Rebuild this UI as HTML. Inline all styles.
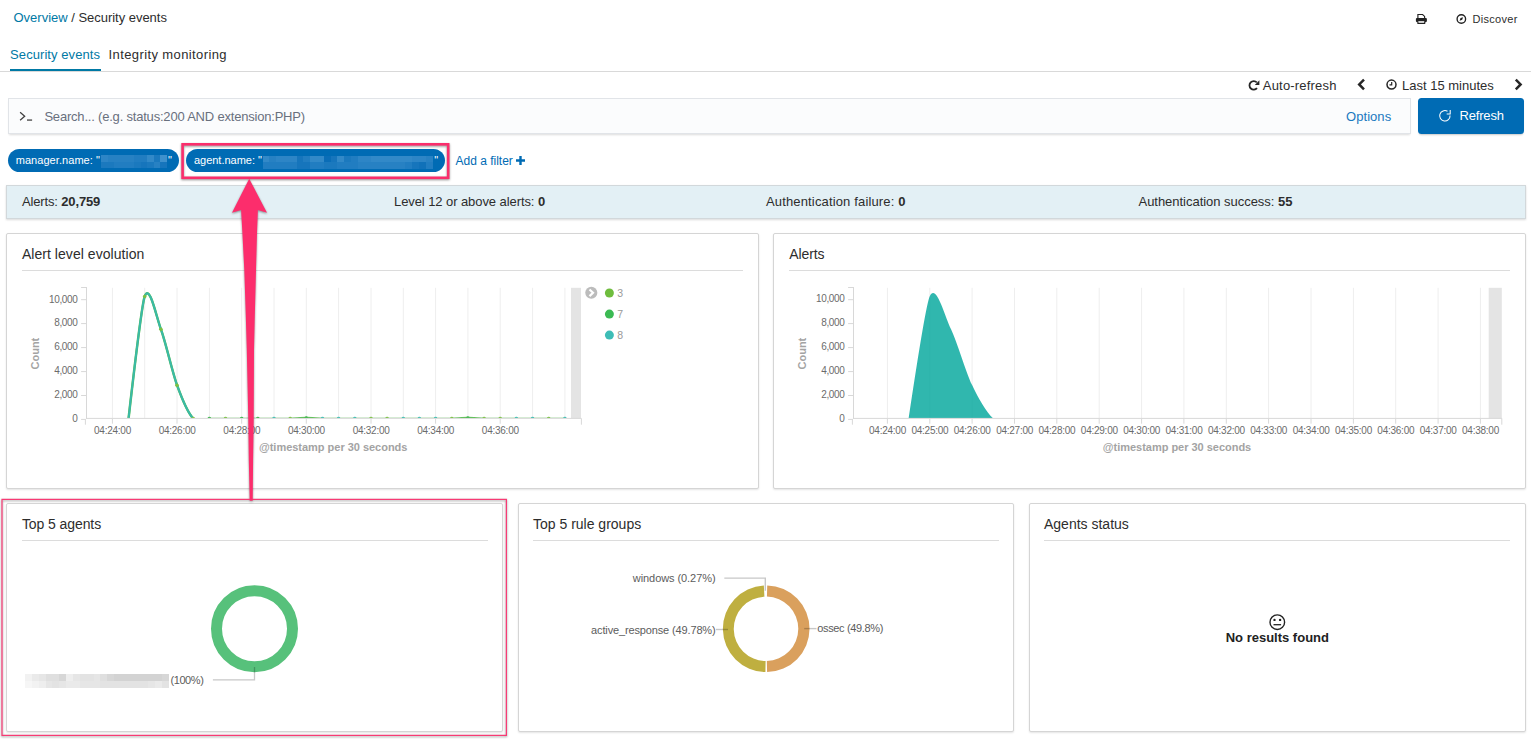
<!DOCTYPE html>
<html>
<head>
<meta charset="utf-8">
<title>Security events</title>
<style>
*{box-sizing:border-box;margin:0;padding:0}
html,body{width:1531px;height:740px;overflow:hidden;background:#fff}
body{font-family:"Liberation Sans",sans-serif;color:#2d2d2d;position:relative}
.t{position:absolute;white-space:pre;line-height:1}
.abs{position:absolute}
.link{color:#0079a5}
.panel{position:absolute;background:#fff;border:1px solid #d5d5d5;border-radius:2px;box-shadow:0 1px 2px rgba(0,0,0,.11)}
.hr{position:absolute;height:1px;background:#dcdcdc}
.ax{position:absolute;white-space:pre;line-height:1;font-size:10px;color:#6b6b6b}
.axr{text-align:right;width:40px;letter-spacing:-.35px}
.axc{text-align:center;width:60px;letter-spacing:-.25px}
.lbl{position:absolute;white-space:pre;line-height:1;font-size:11px;color:#5c5c5c}
.axt{position:absolute;white-space:pre;line-height:1;font-size:11px;font-weight:700;color:#a3a3a3}
svg{position:absolute;overflow:visible}
</style>
</head>
<body>

<!-- breadcrumb -->
<span class="t link" style="left:13.5px;top:11.2px;font-size:13px">Overview</span>
<span class="t" style="left:67.7px;top:11.2px;font-size:13px;letter-spacing:-.03px"> / Security events</span>

<!-- top right -->
<svg id="ic-print" style="left:1415px;top:13px" width="13" height="12" viewBox="1415 13 13 12"><path d="M1417.9 18.4V14.5H1422.6L1424.6 16.4V18.4" fill="#fff" stroke="#222" stroke-width="1.15"/><rect x="1415.9" y="18" width="11" height="4.2" rx="1.1" fill="#222"/><path d="M1417.9 21.2V23.4H1424.7V21.2" fill="#fff" stroke="#222" stroke-width="1.1"/></svg>
<svg id="ic-compass" style="left:1455px;top:13px" width="13" height="12" viewBox="1455 13 13 12"><circle cx="1461.35" cy="18.95" r="4.25" fill="none" stroke="#222" stroke-width="1.35"/><path d="M1463.1 17.2L1462.2 19.8 1459.6 20.7 1460.5 18.1z" fill="#222"/></svg>
<span class="t" style="left:1472.5px;top:13.7px;font-size:11px;letter-spacing:.3px">Discover</span>

<!-- tabs -->
<span class="t link" style="left:10.1px;top:48px;font-size:13px;letter-spacing:.07px">Security events</span>
<span class="t" style="left:108.6px;top:48px;font-size:13px;letter-spacing:.39px">Integrity monitoring</span>
<div class="abs" style="left:0;top:71px;width:1531px;height:1px;background:#d9d9d9"></div>
<div class="abs" style="left:10px;top:69px;width:91px;height:2px;background:#0079a5"></div>

<!-- time row -->
<svg id="ic-autoref" style="left:1247px;top:78px" width="14" height="14" viewBox="1247 78 14 14"><path d="M1257 88.2A4.3 4.3 0 1 1 1256.8 82.3" fill="none" stroke="#262626" stroke-width="1.8"/><path d="M1259.4 80.3V84.9H1254.8z" fill="#262626"/></svg>
<span class="t" style="left:1262.8px;top:78.8px;font-size:13px;letter-spacing:.19px">Auto-refresh</span>
<svg id="ic-left" style="left:1357.3px;top:77.6px" width="9" height="13" viewBox="0 0 9 13"><path d="M7 1.6L2.2 6.45 7 11.3" fill="none" stroke="#262626" stroke-width="2.5"/></svg>
<svg id="ic-clock" style="left:1385.5px;top:78.7px" width="11" height="11" viewBox="0 0 11 11"><circle cx="5.5" cy="5.6" r="4.5" fill="none" stroke="#262626" stroke-width="1.5"/><path d="M5.7 2.9V5.9H3.5" fill="none" stroke="#262626" stroke-width="1.2"/></svg>
<span class="t" style="left:1402px;top:78.8px;font-size:13px">Last 15 minutes</span>
<svg id="ic-right" style="left:1513.6px;top:77.6px" width="9" height="13" viewBox="0 0 9 13"><path d="M1.8 1.6L6.6 6.45 1.8 11.3" fill="none" stroke="#262626" stroke-width="2.5"/></svg>

<!-- search -->
<div class="abs" style="left:8px;top:98px;width:1403px;height:36px;background:#fbfcfd;border:1px solid #e1e4e8;box-shadow:0 2px 2px -1px rgba(0,0,0,.14)"></div>
<svg id="ic-prompt" style="left:18px;top:110px" width="16" height="13" viewBox="18 110 16 13"><path d="M20.1 112.2L24.7 116.2 20.1 120.3" fill="none" stroke="#404040" stroke-width="1.25"/><rect x="27" y="119.2" width="5.1" height="1.8" fill="#777"/></svg>
<span class="t" style="left:44.4px;top:110px;font-size:13px;color:#69707d;letter-spacing:-.2px">Search... (e.g. status:200 AND extension:PHP)</span>
<span class="t" style="left:1346px;top:110px;font-size:13px;color:#1a79c0;letter-spacing:.06px">Options</span>
<div class="abs" style="left:1418px;top:98px;width:106px;height:36px;background:#006bb4;border-radius:3.5px;box-shadow:0 2px 2px -1px rgba(0,0,0,.22)"></div>
<svg id="ic-refresh" style="left:1438px;top:108px" width="15" height="15" viewBox="1438 108 15 15"><path d="M1450.05 115.5A5.2 5.2 0 1 1 1447.5 111.3" fill="none" stroke="#fff" stroke-width="1.05"/><path d="M1450.2 110.1V113.95H1446.7" fill="none" stroke="#fff" stroke-width="1.05"/></svg>
<span class="t" style="left:1459.6px;top:109px;font-size:13px;color:#fff;letter-spacing:-.2px">Refresh</span>

<!-- filter pills -->
<div class="abs" style="left:8px;top:149px;width:171px;height:23px;border-radius:12px;background:#006bb4"></div>
<span class="t" style="left:15.7px;top:154.6px;font-size:11px;color:#fff;letter-spacing:.06px">manager.name: "</span>
<div id="blur1" class="abs" style="left:101px;top:155.1px;width:67px;height:13px"><i style="position:absolute;left:0.00px;top:0.00px;width:6.90px;height:6.70px;background:rgb(45,133,198)"></i><i style="position:absolute;left:6.60px;top:0.00px;width:6.90px;height:6.70px;background:rgb(39,129,195)"></i><i style="position:absolute;left:13.20px;top:0.00px;width:6.90px;height:6.70px;background:rgb(39,129,195)"></i><i style="position:absolute;left:19.80px;top:0.00px;width:6.90px;height:6.70px;background:rgb(39,129,195)"></i><i style="position:absolute;left:26.40px;top:0.00px;width:6.90px;height:6.70px;background:rgb(39,129,195)"></i><i style="position:absolute;left:33.00px;top:0.00px;width:6.90px;height:6.70px;background:rgb(33,125,193)"></i><i style="position:absolute;left:39.60px;top:0.00px;width:6.90px;height:6.70px;background:rgb(33,125,193)"></i><i style="position:absolute;left:46.20px;top:0.00px;width:6.90px;height:6.70px;background:rgb(50,137,200)"></i><i style="position:absolute;left:52.80px;top:0.00px;width:6.90px;height:6.70px;background:rgb(27,121,190)"></i><i style="position:absolute;left:59.40px;top:0.00px;width:6.90px;height:6.70px;background:rgb(62,145,205)"></i><i style="position:absolute;left:0.00px;top:6.50px;width:6.90px;height:6.70px;background:rgb(27,121,190)"></i><i style="position:absolute;left:6.60px;top:6.50px;width:6.90px;height:6.70px;background:rgb(27,121,190)"></i><i style="position:absolute;left:13.20px;top:6.50px;width:6.90px;height:6.70px;background:rgb(33,125,193)"></i><i style="position:absolute;left:19.80px;top:6.50px;width:6.90px;height:6.70px;background:rgb(33,125,193)"></i><i style="position:absolute;left:26.40px;top:6.50px;width:6.90px;height:6.70px;background:rgb(33,125,193)"></i><i style="position:absolute;left:33.00px;top:6.50px;width:6.90px;height:6.70px;background:rgb(27,121,190)"></i><i style="position:absolute;left:39.60px;top:6.50px;width:6.90px;height:6.70px;background:rgb(22,117,188)"></i><i style="position:absolute;left:46.20px;top:6.50px;width:6.90px;height:6.70px;background:rgb(27,121,190)"></i><i style="position:absolute;left:52.80px;top:6.50px;width:6.90px;height:6.70px;background:rgb(39,129,195)"></i><i style="position:absolute;left:59.40px;top:6.50px;width:6.90px;height:6.70px;background:rgb(22,117,188)"></i></div>
<span class="t" style="left:168px;top:154.6px;font-size:11px;color:#fff">"</span>

<div class="abs" style="left:186px;top:149px;width:259px;height:23px;border-radius:12px;background:#006bb4"></div>
<span class="t" style="left:193.9px;top:154.6px;font-size:11px;color:#fff;letter-spacing:0px">agent.name: "</span>
<div id="blur2" class="abs" style="left:262.5px;top:156.1px;width:170px;height:13px"><i style="position:absolute;left:0.00px;top:0.00px;width:7.10px;height:6.35px;background:rgb(50,137,200)"></i><i style="position:absolute;left:6.80px;top:0.00px;width:7.10px;height:6.35px;background:rgb(39,129,195)"></i><i style="position:absolute;left:13.60px;top:0.00px;width:7.10px;height:6.35px;background:rgb(45,133,198)"></i><i style="position:absolute;left:20.40px;top:0.00px;width:7.10px;height:6.35px;background:rgb(45,133,198)"></i><i style="position:absolute;left:27.20px;top:0.00px;width:7.10px;height:6.35px;background:rgb(45,133,198)"></i><i style="position:absolute;left:34.00px;top:0.00px;width:7.10px;height:6.35px;background:rgb(22,117,188)"></i><i style="position:absolute;left:40.80px;top:0.00px;width:7.10px;height:6.35px;background:rgb(33,125,193)"></i><i style="position:absolute;left:47.60px;top:0.00px;width:7.10px;height:6.35px;background:rgb(50,137,200)"></i><i style="position:absolute;left:54.40px;top:0.00px;width:7.10px;height:6.35px;background:rgb(50,137,200)"></i><i style="position:absolute;left:61.20px;top:0.00px;width:7.10px;height:6.35px;background:rgb(10,109,183)"></i><i style="position:absolute;left:68.00px;top:0.00px;width:7.10px;height:6.35px;background:rgb(22,117,188)"></i><i style="position:absolute;left:74.80px;top:0.00px;width:7.10px;height:6.35px;background:rgb(50,137,200)"></i><i style="position:absolute;left:81.60px;top:0.00px;width:7.10px;height:6.35px;background:rgb(27,121,190)"></i><i style="position:absolute;left:88.40px;top:0.00px;width:7.10px;height:6.35px;background:rgb(33,125,193)"></i><i style="position:absolute;left:95.20px;top:0.00px;width:7.10px;height:6.35px;background:rgb(45,133,198)"></i><i style="position:absolute;left:102.00px;top:0.00px;width:7.10px;height:6.35px;background:rgb(45,133,198)"></i><i style="position:absolute;left:108.80px;top:0.00px;width:7.10px;height:6.35px;background:rgb(50,137,200)"></i><i style="position:absolute;left:115.60px;top:0.00px;width:7.10px;height:6.35px;background:rgb(50,137,200)"></i><i style="position:absolute;left:122.40px;top:0.00px;width:7.10px;height:6.35px;background:rgb(50,137,200)"></i><i style="position:absolute;left:129.20px;top:0.00px;width:7.10px;height:6.35px;background:rgb(50,137,200)"></i><i style="position:absolute;left:136.00px;top:0.00px;width:7.10px;height:6.35px;background:rgb(50,137,200)"></i><i style="position:absolute;left:142.80px;top:0.00px;width:7.10px;height:6.35px;background:rgb(50,137,200)"></i><i style="position:absolute;left:149.60px;top:0.00px;width:7.10px;height:6.35px;background:rgb(45,133,198)"></i><i style="position:absolute;left:156.40px;top:0.00px;width:7.10px;height:6.35px;background:rgb(45,133,198)"></i><i style="position:absolute;left:163.20px;top:0.00px;width:7.10px;height:6.35px;background:rgb(39,129,195)"></i><i style="position:absolute;left:0.00px;top:6.15px;width:7.10px;height:6.35px;background:rgb(33,125,193)"></i><i style="position:absolute;left:6.80px;top:6.15px;width:7.10px;height:6.35px;background:rgb(33,125,193)"></i><i style="position:absolute;left:13.60px;top:6.15px;width:7.10px;height:6.35px;background:rgb(33,125,193)"></i><i style="position:absolute;left:20.40px;top:6.15px;width:7.10px;height:6.35px;background:rgb(33,125,193)"></i><i style="position:absolute;left:27.20px;top:6.15px;width:7.10px;height:6.35px;background:rgb(33,125,193)"></i><i style="position:absolute;left:34.00px;top:6.15px;width:7.10px;height:6.35px;background:rgb(22,117,188)"></i><i style="position:absolute;left:40.80px;top:6.15px;width:7.10px;height:6.35px;background:rgb(22,117,188)"></i><i style="position:absolute;left:47.60px;top:6.15px;width:7.10px;height:6.35px;background:rgb(33,125,193)"></i><i style="position:absolute;left:54.40px;top:6.15px;width:7.10px;height:6.35px;background:rgb(33,125,193)"></i><i style="position:absolute;left:61.20px;top:6.15px;width:7.10px;height:6.35px;background:rgb(27,121,190)"></i><i style="position:absolute;left:68.00px;top:6.15px;width:7.10px;height:6.35px;background:rgb(27,121,190)"></i><i style="position:absolute;left:74.80px;top:6.15px;width:7.10px;height:6.35px;background:rgb(33,125,193)"></i><i style="position:absolute;left:81.60px;top:6.15px;width:7.10px;height:6.35px;background:rgb(33,125,193)"></i><i style="position:absolute;left:88.40px;top:6.15px;width:7.10px;height:6.35px;background:rgb(33,125,193)"></i><i style="position:absolute;left:95.20px;top:6.15px;width:7.10px;height:6.35px;background:rgb(39,129,195)"></i><i style="position:absolute;left:102.00px;top:6.15px;width:7.10px;height:6.35px;background:rgb(39,129,195)"></i><i style="position:absolute;left:108.80px;top:6.15px;width:7.10px;height:6.35px;background:rgb(39,129,195)"></i><i style="position:absolute;left:115.60px;top:6.15px;width:7.10px;height:6.35px;background:rgb(39,129,195)"></i><i style="position:absolute;left:122.40px;top:6.15px;width:7.10px;height:6.35px;background:rgb(39,129,195)"></i><i style="position:absolute;left:129.20px;top:6.15px;width:7.10px;height:6.35px;background:rgb(39,129,195)"></i><i style="position:absolute;left:136.00px;top:6.15px;width:7.10px;height:6.35px;background:rgb(39,129,195)"></i><i style="position:absolute;left:142.80px;top:6.15px;width:7.10px;height:6.35px;background:rgb(33,125,193)"></i><i style="position:absolute;left:149.60px;top:6.15px;width:7.10px;height:6.35px;background:rgb(22,117,188)"></i><i style="position:absolute;left:156.40px;top:6.15px;width:7.10px;height:6.35px;background:rgb(16,113,185)"></i><i style="position:absolute;left:163.20px;top:6.15px;width:7.10px;height:6.35px;background:rgb(33,125,193)"></i></div>
<span class="t" style="left:434.3px;top:154.6px;font-size:11px;color:#fff">"</span>

<span class="t" style="left:455.5px;top:155.3px;font-size:12px;color:#006bb4">Add a filter</span>
<svg id="ic-plus" style="left:516px;top:156px" width="9" height="9" viewBox="0 0 9 9"><path d="M4.5 0V9M0 4.5H9" stroke="#006bb4" stroke-width="2.4" fill="none"/></svg>

<!-- stats bar -->
<div class="abs" style="left:6px;top:185px;width:1520px;height:34px;background:#e3f0f5;border:1px solid #d2d8db;box-shadow:0 1px 2px rgba(0,0,0,.15)"></div>
<span class="t" style="left:21.9px;top:195px;font-size:13px;letter-spacing:-.14px">Alerts: <b>20,759</b></span>
<span class="t" style="left:394px;top:195px;font-size:13px;letter-spacing:-.08px">Level 12 or above alerts: <b>0</b></span>
<span class="t" style="left:766px;top:195px;font-size:13px;letter-spacing:.15px">Authentication failure: <b>0</b></span>
<span class="t" style="left:1138.5px;top:195px;font-size:13px;letter-spacing:-.03px">Authentication success: <b>55</b></span>

<!-- PANELS -->
<div class="panel" id="p1" style="left:6px;top:233px;width:753px;height:256px"></div>
<div class="panel" id="p2" style="left:773px;top:233px;width:753px;height:256px"></div>
<div class="panel" id="p3" style="left:6px;top:503px;width:497px;height:229px"></div>
<div class="panel" id="p4" style="left:518px;top:503px;width:496px;height:229px"></div>
<div class="panel" id="p5" style="left:1029px;top:503px;width:497px;height:229px"></div>

<span class="t" style="left:21.9px;top:247px;font-size:14px;letter-spacing:.05px">Alert level evolution</span>
<div class="hr" style="left:22px;top:270px;width:721px"></div>
<span class="t" style="left:789.3px;top:247px;font-size:14px;letter-spacing:-.12px">Alerts</span>
<div class="hr" style="left:789px;top:270px;width:721px"></div>
<span class="t" style="left:21.9px;top:517px;font-size:14px;letter-spacing:-.08px">Top 5 agents</span>
<div class="hr" style="left:22px;top:540px;width:466px"></div>
<span class="t" style="left:533px;top:517px;font-size:14px">Top 5 rule groups</span>
<div class="hr" style="left:533px;top:540px;width:466px"></div>
<span class="t" style="left:1044px;top:517px;font-size:14px">Agents status</span>
<div class="hr" style="left:1044px;top:540px;width:466px"></div>

<!-- CHART 1 -->
<svg id="chart1" style="left:0;top:0" width="1531" height="740" viewBox="0 0 1531 740">
<!--CH-->
<line x1="112.4" y1="287.8" x2="112.4" y2="418.5" stroke="#eeeeee" stroke-width="1"/>
<line x1="144.7" y1="287.8" x2="144.7" y2="418.5" stroke="#eeeeee" stroke-width="1"/>
<line x1="177.0" y1="287.8" x2="177.0" y2="418.5" stroke="#eeeeee" stroke-width="1"/>
<line x1="209.4" y1="287.8" x2="209.4" y2="418.5" stroke="#eeeeee" stroke-width="1"/>
<line x1="241.7" y1="287.8" x2="241.7" y2="418.5" stroke="#eeeeee" stroke-width="1"/>
<line x1="274.0" y1="287.8" x2="274.0" y2="418.5" stroke="#eeeeee" stroke-width="1"/>
<line x1="306.3" y1="287.8" x2="306.3" y2="418.5" stroke="#eeeeee" stroke-width="1"/>
<line x1="338.6" y1="287.8" x2="338.6" y2="418.5" stroke="#eeeeee" stroke-width="1"/>
<line x1="371.0" y1="287.8" x2="371.0" y2="418.5" stroke="#eeeeee" stroke-width="1"/>
<line x1="403.3" y1="287.8" x2="403.3" y2="418.5" stroke="#eeeeee" stroke-width="1"/>
<line x1="435.6" y1="287.8" x2="435.6" y2="418.5" stroke="#eeeeee" stroke-width="1"/>
<line x1="467.9" y1="287.8" x2="467.9" y2="418.5" stroke="#eeeeee" stroke-width="1"/>
<line x1="500.2" y1="287.8" x2="500.2" y2="418.5" stroke="#eeeeee" stroke-width="1"/>
<line x1="532.6" y1="287.8" x2="532.6" y2="418.5" stroke="#eeeeee" stroke-width="1"/>
<line x1="564.9" y1="287.8" x2="564.9" y2="418.5" stroke="#eeeeee" stroke-width="1"/>
<rect x="571" y="287.8" width="10.0" height="130.7" fill="#e4e4e4"/>
<clipPath id="cl86"><rect x="86.5" y="287.8" width="494.9" height="130.2"/></clipPath><g clip-path="url(#cl86)">
<path d="M128.56,418.50Q141.49,305.35,144.72,296.42C149.57,283.02,156.03,315.87,160.88,329.17S172.19,371.75,177.04,385.15S188.35,413.43,193.20,418.50S204.51,418.90,209.36,418.98S220.67,418.98,225.52,418.98S236.83,418.98,241.68,418.98S252.99,418.98,257.84,418.98S269.15,418.98,274.00,418.98S285.31,419.12,290.16,418.98S301.47,418.05,306.32,418.05S317.63,418.84,322.48,418.98S333.79,418.98,338.64,418.98S349.95,418.98,354.80,418.98S366.11,418.98,370.96,418.98S382.27,418.98,387.12,418.98S398.43,418.98,403.28,418.98S414.59,418.98,419.44,418.98S430.75,418.98,435.60,418.98S446.91,419.12,451.76,418.98S463.07,418.05,467.92,418.05S479.23,418.84,484.08,418.98S495.39,418.98,500.24,418.98S511.55,418.98,516.40,418.98S527.71,418.98,532.56,418.98S543.87,418.98,548.72,418.98Q551.95,418.98,564.88,418.98" fill="none" stroke="#58bd4f" stroke-width="2.5" stroke-linejoin="round"/>
<path d="M128.56,418.50Q141.49,305.35,144.72,296.42C149.57,283.02,156.03,315.87,160.88,329.17S172.19,371.75,177.04,385.15S188.35,413.43,193.20,418.50S204.51,418.90,209.36,418.98S220.67,418.98,225.52,418.98S236.83,418.98,241.68,418.98S252.99,418.98,257.84,418.98S269.15,418.98,274.00,418.98S285.31,418.98,290.16,418.98S301.47,418.98,306.32,418.98S317.63,418.98,322.48,418.98S333.79,418.98,338.64,418.98S349.95,418.98,354.80,418.98S366.11,418.98,370.96,418.98S382.27,418.98,387.12,418.98S398.43,418.98,403.28,418.98S414.59,418.98,419.44,418.98S430.75,418.98,435.60,418.98S446.91,418.98,451.76,418.98S463.07,418.98,467.92,418.98S479.23,418.98,484.08,418.98S495.39,418.98,500.24,418.98S511.55,418.98,516.40,418.98S527.71,418.98,532.56,418.98S543.87,418.98,548.72,418.98Q551.95,418.98,564.88,418.98" fill="none" stroke="#3ab9a8" stroke-width="2" stroke-linejoin="round"/>
<ellipse cx="144.7" cy="296.4" rx="1.8" ry="1.7" fill="#7bc043"/>
<ellipse cx="160.9" cy="329.2" rx="1.8" ry="1.7" fill="#7bc043"/>
<ellipse cx="177.0" cy="385.2" rx="1.8" ry="1.7" fill="#7bc043"/>
<ellipse cx="193.2" cy="418.5" rx="1.8" ry="1.7" fill="#7bc043"/>
<ellipse cx="209.4" cy="418.5" rx="1.8" ry="1.7" fill="#3cb54a"/>
<ellipse cx="225.5" cy="418.5" rx="1.8" ry="1.7" fill="#7bc043"/>
<ellipse cx="241.7" cy="418.5" rx="1.8" ry="1.7" fill="#3cb54a"/>
<ellipse cx="257.8" cy="418.5" rx="1.8" ry="1.7" fill="#3cb54a"/>
<ellipse cx="274.0" cy="418.5" rx="1.8" ry="1.7" fill="#3ebcb4"/>
<ellipse cx="290.2" cy="418.5" rx="1.8" ry="1.7" fill="#7bc043"/>
<ellipse cx="306.3" cy="418.0" rx="1.8" ry="1.7" fill="#3cb54a"/>
<ellipse cx="322.5" cy="418.5" rx="1.8" ry="1.7" fill="#3ebcb4"/>
<ellipse cx="338.6" cy="418.5" rx="1.8" ry="1.7" fill="#3ebcb4"/>
<ellipse cx="354.8" cy="418.5" rx="1.8" ry="1.7" fill="#3ebcb4"/>
<ellipse cx="371.0" cy="418.5" rx="1.8" ry="1.7" fill="#7bc043"/>
<ellipse cx="387.1" cy="418.5" rx="1.8" ry="1.7" fill="#7bc043"/>
<ellipse cx="403.3" cy="418.5" rx="1.8" ry="1.7" fill="#3ebcb4"/>
<ellipse cx="419.4" cy="418.5" rx="1.8" ry="1.7" fill="#3ebcb4"/>
<ellipse cx="435.6" cy="418.5" rx="1.8" ry="1.7" fill="#3ebcb4"/>
<ellipse cx="451.8" cy="418.5" rx="1.8" ry="1.7" fill="#7bc043"/>
<ellipse cx="467.9" cy="418.0" rx="1.8" ry="1.7" fill="#3cb54a"/>
<ellipse cx="484.1" cy="418.5" rx="1.8" ry="1.7" fill="#7bc043"/>
<ellipse cx="500.2" cy="418.5" rx="1.8" ry="1.7" fill="#7bc043"/>
<ellipse cx="516.4" cy="418.5" rx="1.8" ry="1.7" fill="#3ebcb4"/>
<ellipse cx="532.6" cy="418.5" rx="1.8" ry="1.7" fill="#3ebcb4"/>
<ellipse cx="548.7" cy="418.5" rx="1.8" ry="1.7" fill="#7bc043"/>
<ellipse cx="564.9" cy="418.5" rx="1.8" ry="1.7" fill="#3ebcb4"/>
</g>
<path d="M81.1,287.5H86.5M86.5,287.0V418.9" fill="none" stroke="#d8d8d8" stroke-width="1"/>
<path d="M86.0,418.4H581.4V424.7" fill="none" stroke="#d8d8d8" stroke-width="1"/>
<path d="M85.4,419.4V424.7" fill="none" stroke="#d8d8d8" stroke-width="1"/>
<line x1="81.1" y1="419.4" x2="86.0" y2="419.4" stroke="#d8d8d8" stroke-width="1"/>
<line x1="81.1" y1="395.5" x2="86.0" y2="395.5" stroke="#d8d8d8" stroke-width="1"/>
<line x1="81.1" y1="371.6" x2="86.0" y2="371.6" stroke="#d8d8d8" stroke-width="1"/>
<line x1="81.1" y1="347.6" x2="86.0" y2="347.6" stroke="#d8d8d8" stroke-width="1"/>
<line x1="81.1" y1="323.6" x2="86.0" y2="323.6" stroke="#d8d8d8" stroke-width="1"/>
<line x1="81.1" y1="299.7" x2="86.0" y2="299.7" stroke="#d8d8d8" stroke-width="1"/>
<line x1="112.4" y1="418.5" x2="112.4" y2="423.7" stroke="#d8d8d8" stroke-width="1"/>
<line x1="177.0" y1="418.5" x2="177.0" y2="423.7" stroke="#d8d8d8" stroke-width="1"/>
<line x1="241.7" y1="418.5" x2="241.7" y2="423.7" stroke="#d8d8d8" stroke-width="1"/>
<line x1="306.3" y1="418.5" x2="306.3" y2="423.7" stroke="#d8d8d8" stroke-width="1"/>
<line x1="371.0" y1="418.5" x2="371.0" y2="423.7" stroke="#d8d8d8" stroke-width="1"/>
<line x1="435.6" y1="418.5" x2="435.6" y2="423.7" stroke="#d8d8d8" stroke-width="1"/>
<line x1="500.2" y1="418.5" x2="500.2" y2="423.7" stroke="#d8d8d8" stroke-width="1"/>
<line x1="887.4" y1="287.8" x2="887.4" y2="418.5" stroke="#eeeeee" stroke-width="1"/>
<line x1="929.8" y1="287.8" x2="929.8" y2="418.5" stroke="#eeeeee" stroke-width="1"/>
<line x1="972.1" y1="287.8" x2="972.1" y2="418.5" stroke="#eeeeee" stroke-width="1"/>
<line x1="1014.5" y1="287.8" x2="1014.5" y2="418.5" stroke="#eeeeee" stroke-width="1"/>
<line x1="1056.8" y1="287.8" x2="1056.8" y2="418.5" stroke="#eeeeee" stroke-width="1"/>
<line x1="1099.2" y1="287.8" x2="1099.2" y2="418.5" stroke="#eeeeee" stroke-width="1"/>
<line x1="1141.6" y1="287.8" x2="1141.6" y2="418.5" stroke="#eeeeee" stroke-width="1"/>
<line x1="1183.9" y1="287.8" x2="1183.9" y2="418.5" stroke="#eeeeee" stroke-width="1"/>
<line x1="1226.3" y1="287.8" x2="1226.3" y2="418.5" stroke="#eeeeee" stroke-width="1"/>
<line x1="1268.6" y1="287.8" x2="1268.6" y2="418.5" stroke="#eeeeee" stroke-width="1"/>
<line x1="1311.0" y1="287.8" x2="1311.0" y2="418.5" stroke="#eeeeee" stroke-width="1"/>
<line x1="1353.4" y1="287.8" x2="1353.4" y2="418.5" stroke="#eeeeee" stroke-width="1"/>
<line x1="1395.7" y1="287.8" x2="1395.7" y2="418.5" stroke="#eeeeee" stroke-width="1"/>
<line x1="1438.1" y1="287.8" x2="1438.1" y2="418.5" stroke="#eeeeee" stroke-width="1"/>
<line x1="1480.4" y1="287.8" x2="1480.4" y2="418.5" stroke="#eeeeee" stroke-width="1"/>
<rect x="1488.7" y="287.8" width="13.1" height="130.7" fill="#e4e4e4"/>
<clipPath id="cl853"><rect x="853.5" y="287.8" width="648.3" height="130.2"/></clipPath><g clip-path="url(#cl853)">
<path d="M908.58,418.46Q925.52,305.16,929.76,296.22C936.11,282.80,944.59,315.69,950.94,329.02S965.77,371.68,972.12,385.10S986.95,413.46,993.30,418.46S1008.13,418.46,1014.48,418.46S1029.31,418.46,1035.66,418.46S1050.49,418.46,1056.84,418.46S1071.67,418.46,1078.02,418.46S1092.85,418.46,1099.20,418.46S1114.03,418.46,1120.38,418.46S1135.21,418.46,1141.56,418.46S1156.39,418.46,1162.74,418.46S1177.57,418.46,1183.92,418.46S1198.75,418.46,1205.10,418.46S1219.93,418.46,1226.28,418.46S1241.11,418.46,1247.46,418.46S1262.29,418.46,1268.64,418.46S1283.47,418.46,1289.82,418.46S1304.65,418.46,1311.00,418.46S1325.83,418.46,1332.18,418.46S1347.01,418.46,1353.36,418.46S1368.19,418.46,1374.54,418.46S1389.37,418.46,1395.72,418.46S1410.55,418.46,1416.90,418.46S1431.73,418.46,1438.08,418.46S1452.91,418.46,1459.26,418.46Q1463.50,418.46,1480.44,418.46L1480.44,418.5L908.58,418.5Z" fill="#00a69b" fill-opacity=".81"/>
</g>
<path d="M848.1,287.5H853.5M853.5,287.0V418.9" fill="none" stroke="#d8d8d8" stroke-width="1"/>
<path d="M853.0,418.4H1501.8V424.7" fill="none" stroke="#d8d8d8" stroke-width="1"/>
<path d="M852.4,419.4V424.7" fill="none" stroke="#d8d8d8" stroke-width="1"/>
<line x1="848.1" y1="419.4" x2="853.0" y2="419.4" stroke="#d8d8d8" stroke-width="1"/>
<line x1="848.1" y1="395.5" x2="853.0" y2="395.5" stroke="#d8d8d8" stroke-width="1"/>
<line x1="848.1" y1="371.6" x2="853.0" y2="371.6" stroke="#d8d8d8" stroke-width="1"/>
<line x1="848.1" y1="347.6" x2="853.0" y2="347.6" stroke="#d8d8d8" stroke-width="1"/>
<line x1="848.1" y1="323.6" x2="853.0" y2="323.6" stroke="#d8d8d8" stroke-width="1"/>
<line x1="848.1" y1="299.7" x2="853.0" y2="299.7" stroke="#d8d8d8" stroke-width="1"/>
<line x1="887.4" y1="418.5" x2="887.4" y2="423.7" stroke="#d8d8d8" stroke-width="1"/>
<line x1="929.8" y1="418.5" x2="929.8" y2="423.7" stroke="#d8d8d8" stroke-width="1"/>
<line x1="972.1" y1="418.5" x2="972.1" y2="423.7" stroke="#d8d8d8" stroke-width="1"/>
<line x1="1014.5" y1="418.5" x2="1014.5" y2="423.7" stroke="#d8d8d8" stroke-width="1"/>
<line x1="1056.8" y1="418.5" x2="1056.8" y2="423.7" stroke="#d8d8d8" stroke-width="1"/>
<line x1="1099.2" y1="418.5" x2="1099.2" y2="423.7" stroke="#d8d8d8" stroke-width="1"/>
<line x1="1141.6" y1="418.5" x2="1141.6" y2="423.7" stroke="#d8d8d8" stroke-width="1"/>
<line x1="1183.9" y1="418.5" x2="1183.9" y2="423.7" stroke="#d8d8d8" stroke-width="1"/>
<line x1="1226.3" y1="418.5" x2="1226.3" y2="423.7" stroke="#d8d8d8" stroke-width="1"/>
<line x1="1268.6" y1="418.5" x2="1268.6" y2="423.7" stroke="#d8d8d8" stroke-width="1"/>
<line x1="1311.0" y1="418.5" x2="1311.0" y2="423.7" stroke="#d8d8d8" stroke-width="1"/>
<line x1="1353.4" y1="418.5" x2="1353.4" y2="423.7" stroke="#d8d8d8" stroke-width="1"/>
<line x1="1395.7" y1="418.5" x2="1395.7" y2="423.7" stroke="#d8d8d8" stroke-width="1"/>
<line x1="1438.1" y1="418.5" x2="1438.1" y2="423.7" stroke="#d8d8d8" stroke-width="1"/>
<line x1="1480.4" y1="418.5" x2="1480.4" y2="423.7" stroke="#d8d8d8" stroke-width="1"/>
<!--/CH-->
</svg>

<!-- axis labels -->
<!--LB-->
<span class="ax axr" style="left:37.5px;top:413.7px">0</span>
<span class="ax axr" style="left:37.5px;top:389.9px">2,000</span>
<span class="ax axr" style="left:37.5px;top:366.0px">4,000</span>
<span class="ax axr" style="left:37.5px;top:342.2px">6,000</span>
<span class="ax axr" style="left:37.5px;top:318.3px">8,000</span>
<span class="ax axr" style="left:37.5px;top:294.5px">10,000</span>
<span class="ax axr" style="left:804.5px;top:413.5px">0</span>
<span class="ax axr" style="left:804.5px;top:389.6px">2,000</span>
<span class="ax axr" style="left:804.5px;top:365.8px">4,000</span>
<span class="ax axr" style="left:804.5px;top:341.9px">6,000</span>
<span class="ax axr" style="left:804.5px;top:318.1px">8,000</span>
<span class="ax axr" style="left:804.5px;top:294.2px">10,000</span>
<span class="ax axc" style="left:82.5px;top:425.5px">04:24:00</span>
<span class="ax axc" style="left:147.1px;top:425.5px">04:26:00</span>
<span class="ax axc" style="left:211.8px;top:425.5px">04:28:00</span>
<span class="ax axc" style="left:276.4px;top:425.5px">04:30:00</span>
<span class="ax axc" style="left:341.1px;top:425.5px">04:32:00</span>
<span class="ax axc" style="left:405.7px;top:425.5px">04:34:00</span>
<span class="ax axc" style="left:470.3px;top:425.5px">04:36:00</span>
<span class="ax axc" style="left:857.5px;top:425.5px">04:24:00</span>
<span class="ax axc" style="left:899.9px;top:425.5px">04:25:00</span>
<span class="ax axc" style="left:942.2px;top:425.5px">04:26:00</span>
<span class="ax axc" style="left:984.6px;top:425.5px">04:27:00</span>
<span class="ax axc" style="left:1026.9px;top:425.5px">04:28:00</span>
<span class="ax axc" style="left:1069.3px;top:425.5px">04:29:00</span>
<span class="ax axc" style="left:1111.7px;top:425.5px">04:30:00</span>
<span class="ax axc" style="left:1154.0px;top:425.5px">04:31:00</span>
<span class="ax axc" style="left:1196.4px;top:425.5px">04:32:00</span>
<span class="ax axc" style="left:1238.7px;top:425.5px">04:33:00</span>
<span class="ax axc" style="left:1281.1px;top:425.5px">04:34:00</span>
<span class="ax axc" style="left:1323.5px;top:425.5px">04:35:00</span>
<span class="ax axc" style="left:1365.8px;top:425.5px">04:36:00</span>
<span class="ax axc" style="left:1408.2px;top:425.5px">04:37:00</span>
<span class="ax axc" style="left:1450.5px;top:425.5px">04:38:00</span>
<!--/LB-->
<span class="axt" style="left:259px;top:441.6px;letter-spacing:-.02px">@timestamp per 30 seconds</span>
<span class="axt" style="left:1102.8px;top:441.6px;letter-spacing:-.02px">@timestamp per 30 seconds</span>
<span class="axt" id="cnt1" style="left:19.5px;top:348.5px;width:30px;text-align:center;transform:rotate(-90deg)">Count</span>
<span class="axt" id="cnt2" style="left:786.5px;top:348.5px;width:30px;text-align:center;transform:rotate(-90deg)">Count</span>

<!-- legend -->
<svg id="legend" style="left:584px;top:286px" width="45" height="56" viewBox="584 286 45 56">
<circle cx="591.3" cy="292.7" r="6.05" fill="#bcbcbc"/>
<path d="M589.5 289.5L593 292.8 589.5 296.1" fill="none" stroke="#fff" stroke-width="2.2"/>
<circle cx="609.4" cy="293" r="4.5" fill="#6fbd3e"/>
<circle cx="609.4" cy="314.1" r="4.5" fill="#3cba53"/>
<circle cx="609.4" cy="335.1" r="4.5" fill="#3ebdb6"/>
</svg>
<span class="lbl" style="left:617.2px;top:288.1px;color:#9a9a9a;font-size:10.5px">3</span>
<span class="lbl" style="left:617.2px;top:309.2px;color:#9a9a9a;font-size:10.5px">7</span>
<span class="lbl" style="left:617.2px;top:330.3px;color:#9a9a9a;font-size:10.5px">8</span>

<!-- donut 1 -->
<svg id="donut1" style="left:0;top:0" width="1531" height="740" viewBox="0 0 1531 740">
<circle cx="254.5" cy="628.8" r="38" fill="none" stroke="#57c17b" stroke-width="11"/>
<path d="M254.5 667V679.9H212.9" fill="none" stroke="#000" stroke-opacity=".22" stroke-width="1.3"/>
<!-- donut 2 -->
<path id="d2r" d="M767.23,585.51A43.3,43.3 0 0 1 767.08,672.09L766.83,660.99A32.2,32.2 0 0 0 766.94,596.61Z" fill="#daa05d"/>
<path id="d2l" d="M765.42,672.09A43.3,43.3 0 0 1 763.83,585.56L764.41,596.64A32.2,32.2 0 0 0 765.59,661.00Z" fill="#bfaf40"/>
<path d="M724.3 578.1H765.3V590.8" fill="none" stroke="#000" stroke-opacity=".22" stroke-width="1.4"/>
<path d="M716 629.5H728" fill="none" stroke="#000" stroke-opacity=".22" stroke-width="1.4"/>
<path d="M804.2 628.6H816.5" fill="none" stroke="#000" stroke-opacity=".22" stroke-width="1.4"/>
<!-- no results icon -->
<circle cx="1277.3" cy="622.2" r="7.3" fill="none" stroke="#222" stroke-width="1.4"/>
<circle cx="1274.5" cy="619.9" r="1.2" fill="#222"/>
<circle cx="1280.1" cy="619.9" r="1.2" fill="#222"/>
<path d="M1273.5 624.7H1281.1" stroke="#222" stroke-width="1.3"/>
</svg>
<span class="lbl" style="left:170.4px;top:674.8px;letter-spacing:-.39px">(100%)</span>
<div id="blur3" class="abs" style="left:25px;top:674px;width:144px;height:13.5px"><i style="position:absolute;left:0.00px;top:0.00px;width:7.16px;height:7.00px;background:rgb(242,242,242)"></i><i style="position:absolute;left:6.86px;top:0.00px;width:7.16px;height:7.00px;background:rgb(234,234,234)"></i><i style="position:absolute;left:13.71px;top:0.00px;width:7.16px;height:7.00px;background:rgb(230,230,230)"></i><i style="position:absolute;left:20.57px;top:0.00px;width:7.16px;height:7.00px;background:rgb(223,223,223)"></i><i style="position:absolute;left:27.43px;top:0.00px;width:7.16px;height:7.00px;background:rgb(223,223,223)"></i><i style="position:absolute;left:34.29px;top:0.00px;width:7.16px;height:7.00px;background:rgb(215,215,215)"></i><i style="position:absolute;left:41.14px;top:0.00px;width:7.16px;height:7.00px;background:rgb(238,238,238)"></i><i style="position:absolute;left:48.00px;top:0.00px;width:7.16px;height:7.00px;background:rgb(230,230,230)"></i><i style="position:absolute;left:54.86px;top:0.00px;width:7.16px;height:7.00px;background:rgb(227,227,227)"></i><i style="position:absolute;left:61.71px;top:0.00px;width:7.16px;height:7.00px;background:rgb(227,227,227)"></i><i style="position:absolute;left:68.57px;top:0.00px;width:7.16px;height:7.00px;background:rgb(230,230,230)"></i><i style="position:absolute;left:75.43px;top:0.00px;width:7.16px;height:7.00px;background:rgb(223,223,223)"></i><i style="position:absolute;left:82.29px;top:0.00px;width:7.16px;height:7.00px;background:rgb(215,215,215)"></i><i style="position:absolute;left:89.14px;top:0.00px;width:7.16px;height:7.00px;background:rgb(211,211,211)"></i><i style="position:absolute;left:96.00px;top:0.00px;width:7.16px;height:7.00px;background:rgb(211,211,211)"></i><i style="position:absolute;left:102.86px;top:0.00px;width:7.16px;height:7.00px;background:rgb(211,211,211)"></i><i style="position:absolute;left:109.71px;top:0.00px;width:7.16px;height:7.00px;background:rgb(211,211,211)"></i><i style="position:absolute;left:116.57px;top:0.00px;width:7.16px;height:7.00px;background:rgb(211,211,211)"></i><i style="position:absolute;left:123.43px;top:0.00px;width:7.16px;height:7.00px;background:rgb(211,211,211)"></i><i style="position:absolute;left:130.29px;top:0.00px;width:7.16px;height:7.00px;background:rgb(211,211,211)"></i><i style="position:absolute;left:137.14px;top:0.00px;width:7.16px;height:7.00px;background:rgb(215,215,215)"></i><i style="position:absolute;left:0.00px;top:6.80px;width:7.16px;height:7.00px;background:rgb(246,246,246)"></i><i style="position:absolute;left:6.86px;top:6.80px;width:7.16px;height:7.00px;background:rgb(242,242,242)"></i><i style="position:absolute;left:13.71px;top:6.80px;width:7.16px;height:7.00px;background:rgb(238,238,238)"></i><i style="position:absolute;left:20.57px;top:6.80px;width:7.16px;height:7.00px;background:rgb(230,230,230)"></i><i style="position:absolute;left:27.43px;top:6.80px;width:7.16px;height:7.00px;background:rgb(227,227,227)"></i><i style="position:absolute;left:34.29px;top:6.80px;width:7.16px;height:7.00px;background:rgb(230,230,230)"></i><i style="position:absolute;left:41.14px;top:6.80px;width:7.16px;height:7.00px;background:rgb(234,234,234)"></i><i style="position:absolute;left:48.00px;top:6.80px;width:7.16px;height:7.00px;background:rgb(234,234,234)"></i><i style="position:absolute;left:54.86px;top:6.80px;width:7.16px;height:7.00px;background:rgb(230,230,230)"></i><i style="position:absolute;left:61.71px;top:6.80px;width:7.16px;height:7.00px;background:rgb(230,230,230)"></i><i style="position:absolute;left:68.57px;top:6.80px;width:7.16px;height:7.00px;background:rgb(230,230,230)"></i><i style="position:absolute;left:75.43px;top:6.80px;width:7.16px;height:7.00px;background:rgb(227,227,227)"></i><i style="position:absolute;left:82.29px;top:6.80px;width:7.16px;height:7.00px;background:rgb(227,227,227)"></i><i style="position:absolute;left:89.14px;top:6.80px;width:7.16px;height:7.00px;background:rgb(227,227,227)"></i><i style="position:absolute;left:96.00px;top:6.80px;width:7.16px;height:7.00px;background:rgb(227,227,227)"></i><i style="position:absolute;left:102.86px;top:6.80px;width:7.16px;height:7.00px;background:rgb(227,227,227)"></i><i style="position:absolute;left:109.71px;top:6.80px;width:7.16px;height:7.00px;background:rgb(227,227,227)"></i><i style="position:absolute;left:116.57px;top:6.80px;width:7.16px;height:7.00px;background:rgb(227,227,227)"></i><i style="position:absolute;left:123.43px;top:6.80px;width:7.16px;height:7.00px;background:rgb(230,230,230)"></i><i style="position:absolute;left:130.29px;top:6.80px;width:7.16px;height:7.00px;background:rgb(234,234,234)"></i><i style="position:absolute;left:137.14px;top:6.80px;width:7.16px;height:7.00px;background:rgb(227,227,227)"></i></div>
<span class="lbl" style="left:632.8px;top:573px;letter-spacing:-.07px">windows (0.27%)</span>
<span class="lbl" style="left:591.1px;top:624.6px;letter-spacing:-.14px">active_response (49.78%)</span>
<span class="lbl" style="left:817.2px;top:623px;letter-spacing:-.34px">ossec (49.8%)</span>
<span class="t" style="left:1225.7px;top:630.9px;font-size:13px;font-weight:700;color:#222">No results found</span>

<!-- pink annotations -->
<svg id="arrow" style="left:0;top:0;filter:drop-shadow(0 1px 1px rgba(0,0,0,.42))" width="1531" height="740" viewBox="0 0 1531 740">
<rect x="182.6" y="144.3" width="265.6" height="33.5" fill="none" stroke="#fa2e6c" stroke-width="2.6"/>
<rect x="2" y="499.4" width="504.4" height="236" fill="none" stroke="#f83a74" stroke-width="1.2"/>
<path d="M249.2 178.8L267 212.7 257.9 209.9 257 233 256 270 254.8 316 254 350 253.7 420 253.1 460 252.7 500.8 249.7 500.8 248.8 460 248.3 420 246.8 350 245.8 316 244.3 270 242.4 233 241.1 209.9 232 212.7Z" fill="#fc2d6c"/>
</svg>

</body>
</html>
